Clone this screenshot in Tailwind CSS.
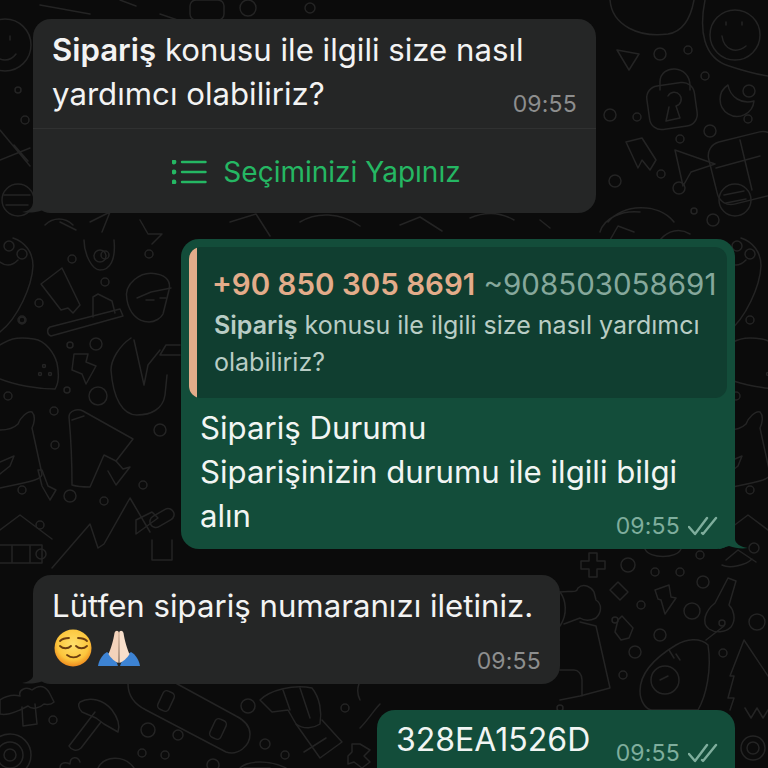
<!DOCTYPE html>
<html lang="tr">
<head>
  <meta charset="UTF-8" />
  <meta name="viewport" content="width=device-width, initial-scale=1.0" />
  <title>Sohbet</title>
  <script src="https://cdn.jsdelivr.net/npm/@tailwindcss/browser@4"></script>
</head>
<body class="bg-[#0b0b0b] font-['Inter','Liberation_Sans',sans-serif]">
  <div class="relative w-[768px] h-[768px] overflow-hidden">

    <!-- wallpaper doodles -->
    <svg class="absolute inset-0" width="768" height="768" viewBox="0 0 768 768" fill="none" stroke="#242424" stroke-width="1.5" stroke-linecap="round" stroke-linejoin="round">
      <g id="edge">
        <path d="M0 332c18-14 32-46 33-66 0-14-8-24-20-28" />
        <circle cx="9" cy="246" r="5" /><circle cx="22" cy="254" r="5" /><path d="M0 262c8 6 14 2 18-2" />
        <circle cx="22" cy="320" r="4" />
        <path d="M0 345c12-8 22-8 34-6 12 2 20 14 23 24 2 10 2 20-2 26-18 0-40-4-55-10" />
        <circle cx="44" cy="366" r="1.500" /><circle cx="40" cy="374" r="1.500" /><circle cx="50" cy="374" r="1.500" />
        <circle cx="8" cy="396" r="4" />
        <path d="M0 430c8 0 14-2 18-6 2-6 10-14 14-12 4 4 2 12 0 16l10 46c0 6-14 8-42 14" />
        <path d="M0 462l14-6-4 10-10 8" />
        <path d="M0 530l20-15 32 24" />
        <circle cx="22" cy="490" r="4" />
      </g>
      <use href="#edge" x="728" />

      <!-- top strip -->
      <circle cx="5" cy="45" r="26" /><path d="M-4 36v4M10 36v4M-6 54c6 8 16 8 22 0" />
      <path d="M160 14l76 26M40 5L90 14M120 0l16 6" />
      <rect x="190" y="0" width="34" height="20" rx="6" /><circle cx="248" cy="8" r="8" /><circle cx="310" cy="8" r="5" />
      <path d="M0 130l30 36M0 160l30-12M14 145l14 16" /><circle cx="25" cy="120" r="4" /><circle cx="18" cy="90" r="3" />
      <circle cx="18" cy="200" r="16" /><path d="M4 195h26M6 205h22" />
      <path d="M45 225c8-8 20-8 28 0M60 222l16 8M90 222l20-10-8 20" />
      <path d="M140 220l8 14 14 0-10 10M230 222l26-8 14 22M300 222c16-10 40-10 60 4" />
      <path d="M400 225l20-8 22 14M470 218c14-6 30-6 44 2M540 220l10 8" />

      <!-- left doodles -->
      <circle cx="72" cy="259" r="4" /><circle cx="105" cy="255" r="4" /><circle cx="149" cy="254" r="4" />
      <path d="M84 240c0 14 8 30 16 30 10 0 16-10 14-30" /><circle cx="100" cy="256" r="6" />
      <path d="M41 284l21-16 18 37-7 8-5-5-7 2z" />
      <path d="M50 327l70-18 3 7-72 20a5 5 0 0 1-1-9z" />
      <path d="M93 317v-20l5-3 14 7 3 12" />
      <circle cx="39" cy="303" r="4" /><circle cx="22" cy="320" r="3" /><circle cx="105" cy="282" r="4" />
      <path d="M127 300c-4-16 14-30 30-26 10 2 14 8 12 16l-6 24c-2 4-8 8-14 8-12 0-20-10-22-22z" />
      <path d="M137 298l14-6 20-4M146 300h8M160 298h6" />
      <path d="M134 340l10 45 4-20 12-15M111 370c0-10 8-24 20-32M180 345l-14 0-6 10 20 0M167 375l-2 20c-2 14-14 20-28 20-14 0-24-16-26-45" />
      <circle cx="70" cy="345" r="3" /><circle cx="96" cy="344" r="6" />
      <path d="M74 354l-2 16 10 4 4 10 10-18-10-4 2-8z" />
      <circle cx="67" cy="390" r="3" /><circle cx="98" cy="396" r="9" /><circle cx="54" cy="411" r="4" /><circle cx="160" cy="430" r="6" />
      <path d="M69 417c0-6 8-9 14-6l50 28-17 22-12-6-14 32c-6 0-12 0-18-2 0-22-1-46-3-68z" />
      <path d="M116 461l7 8 7-2-14 18-8-14M72 420l12-4" />
      <path d="M42 470l6 16 8 4-6 10-8-14-4-16z" />
      <circle cx="55" cy="445" r="4" /><circle cx="70" cy="496" r="6" /><circle cx="104" cy="501" r="4" /><circle cx="143" cy="485" r="4" />
      <path d="M0 545h42v18H0M12 545v18M30 545v18" /><circle cx="40" cy="525" r="4" /><circle cx="41" cy="554" r="5" />
      <path d="M52 568l38-44 8 24 6-4 26-46 20 34" />
      <path d="M136 520l16-8 6 6-22 16z" /><rect x="156" y="505" width="12" height="26" rx="6" transform="rotate(60 162 518)" />
      <path d="M152 540v20h20v-20" />

      <!-- top right -->
      <path d="M610 0c2 26 30 38 58 34 12-2 22-12 26-34" />
      <circle cx="660" cy="54" r="6" /><circle cx="688" cy="50" r="4" />
      <path d="M617 50l22 4-10 16z" />
      <circle cx="735" cy="35" r="25" /><path d="M722 36c2 14 14 18 24 10M726 22v3M742 22v3" />
      <path d="M705 0c-6 30-2 58 24 66 12 4 26 8 39 10" />
      <path d="M660 90v-8c0-18 30-18 30 4v4" />
      <rect x="648" y="84" width="48" height="44" rx="12" transform="rotate(-8 672 106)" />
      <path d="M668 96a7 7 0 1 1 8 10l4 12-14 3 3-14" />
      <circle cx="705" cy="76" r="4" /><circle cx="637" cy="117" r="4" /><circle cx="610" cy="115" r="6" /><circle cx="710" cy="131" r="6" /><circle cx="749" cy="91" r="6" /><circle cx="748" cy="119" r="4" /><circle cx="680" cy="139" r="4" />
      <path d="M728 85a17 17 0 1 0 26 16c-12 4-24-4-26-16z" />
      <path d="M626 142l16-4 14 22-6 10-8-10-4 8z" />
      <path d="M675 150l40 14-24 8-8 14z" />
      <circle cx="661" cy="174" r="4" /><circle cx="615" cy="181" r="6" /><circle cx="679" cy="188" r="6" /><circle cx="694" cy="211" r="3" /><circle cx="713" cy="220" r="6" />
      <rect x="712" y="136" width="70" height="64" rx="14" transform="rotate(-14 747 168)" />
      <path d="M716 168l44-12M740 140l12 50" />
      <circle cx="735" cy="200" r="16" /><path d="M724 195l20-4M726 203l20-4" />
      <path d="M608 222c14-18 50-20 66 0M600 232c4-14 22-22 40-20" />
      <path d="M610 240l8-14 16 6M660 240c8-10 20-12 30-6" />

      <!-- bottom right -->
      <path d="M589 553v8h-8v8h8v8h8v-8h8v-8h-8v-8z" />
      <circle cx="628" cy="565" r="7" /><circle cx="655" cy="572" r="4" /><circle cx="680" cy="572" r="4" /><circle cx="703" cy="582" r="6" />
      <path d="M645 549c4 10 32 10 36 0" /><circle cx="700" cy="555" r="4" />
      <path d="M610 590l8-8 10 10-8 8z" />
      <path d="M655 590l14-5 2 12 5 1-11 16-4-14-3-1z" />
      <circle cx="641" cy="605" r="4" /><circle cx="692" cy="611" r="8" />
      <path d="M728 578l8 3-7 24c4 4 8 14 2 22-6 6-16 6-22 2-8-6-4-18 6-26z" /><circle cx="722" cy="623" r="3" />
      <circle cx="757" cy="622" r="8" />
      <path d="M618 620l4-4 11 12-4 10-8 2-6-8z" /><circle cx="615" cy="620" r="3" />
      <circle cx="660" cy="635" r="6" /><circle cx="635" cy="652" r="6" /><circle cx="723" cy="653" r="4" /><circle cx="623" cy="675" r="4" />
      <path d="M708 645c-8-8-22-6-32 0-20 12-36 28-36 46 0 10 6 19 12 19h46c8-14 14-40 10-65z" />
      <circle cx="665" cy="680" r="14" /><path d="M669 650l5 8M676 654l4 6M660 680l8-4" /><path d="M706 640l18-14" />
      <path d="M744 640l-14 36 4 0-6 22 6 0-4 12M744 640l24 36" />
      <path d="M560 592c12-2 16 2 18-4 6-6 14 0 16 4l2 8c6 4 6 12 0 18-4 2-10 4-16 0l-16 6" />
      <path d="M560 592c6 8 8 22 0 34M580 622l16 4 14 62-30 8-20 4M560 670h14c4 0 8 4 8 10v16" />
      <circle cx="560" cy="708" r="3" /><path d="M722 565c8 4 24 0 30-6M726 560l12-10 18 12" />
      <circle cx="754" cy="548" r="5" />

      <!-- bottom left -->
      <path d="M0 700c6-4 12-6 20-4-2-6 6-10 12-6 8-6 14-4 18 4l4 8c-4 4-8 2-10 2-4 4-12 6-16 2l-8 4c-6 2-12 6-20 4z" />
      <path d="M22 707l1 19 14-2-2-20" />
      <circle cx="53" cy="720" r="4" />
      <path d="M80 702c10-6 24-2 32 8 6 8 8 16 6 22l-14-8-8-6-14-6c-4-4-4-8-2-10z" />
      <path d="M95 712l-26 34c2 4 8 6 12 2l20-26" />
      <circle cx="10" cy="755" r="21" /><circle cx="10" cy="755" r="13" /><circle cx="10" cy="755" r="6" />
      <circle cx="148" cy="730" r="7" /><circle cx="178" cy="735" r="5" /><circle cx="142" cy="753" r="4" /><circle cx="165" cy="755" r="4" /><circle cx="248" cy="706" r="7" /><circle cx="265" cy="744" r="5" /><circle cx="285" cy="755" r="4" /><circle cx="345" cy="708" r="4" /><circle cx="213" cy="765" r="6" />
      <path d="M128 684c0 12 6 20 18 26l80 42c12 4 24-6 24-18 0-8-6-14-14-18l-66-36" />
      <rect x="160" y="691" width="12" height="20" rx="4" transform="rotate(25 166 701)" /><rect x="212" y="719" width="12" height="20" rx="4" transform="rotate(25 218 729)" />
      <path d="M260 700c10-10 34-16 52-12 8 10 10 24 8 36-6 4-16 6-24 0l-8-14-16 2-8-8z" />
      <path d="M283 690l7 20M300 688l10 30M296 724l24 34 22-16-20-22" />
      <path d="M304 752l22-14" />
      <path d="M60 768c0-6 6-6 10-4 0-8 8-8 10-2M98 768c6-12 26-14 36 0M244 768h26M360 700c-4-8-2-16 2-22M360 728c8-8 14-18 20-24M240 768c8-8 30-8 46 0" />
      <path d="M360 744l10 6-6 6 6 6-8 6-8-6-6 2v-8l4-4v-8z" />
      <path d="M745 708l6 10 6-10 6 10 5-8" />
      <circle cx="753" cy="748" r="12" /><circle cx="753" cy="748" r="6" />
    </svg>

    <main class="relative flex flex-col gap-[26px] pt-[19px]">

      <!-- incoming list message -->
      <div class="relative self-start ml-[33px] w-[563px] h-[194px] rounded-[18px] bg-[#252626]">
        <svg class="absolute left-[-12px] bottom-0" width="30" height="20" viewBox="0 0 30 20" fill="#252626"><path d="M12 0v12c0 3-5 6-11 7 6 1 13 1 21-2l8 3V0z" /></svg>
        <div class="relative h-[109px] px-[19px] pt-[9px] text-[31.2px] leading-[44px] text-[#f3f3f3]">
          <p><span class="font-semibold">Sipariş</span> konusu ile ilgili size nasıl<br />yardımcı olabiliriz?</p>
          <span class="absolute right-[19px] top-[72px] text-[23px] leading-[26px] tracking-[0.2px] text-[#8d8e8e]">09:55</span>
        </div>
        <div class="relative flex items-center justify-center gap-[16px] h-[85px] pt-[2px] pl-[4px] border-t border-[#303131] text-[#25b763]">
          <svg width="35" height="24" viewBox="0 0 35 24" fill="none" stroke="currentColor" stroke-width="2.4" stroke-linecap="round">
            <path d="M10 2h23.500M10 12h23.500M10 22h23.500" />
            <circle cx="2" cy="2" r="1.200" fill="currentColor" /><circle cx="2" cy="12" r="1.200" fill="currentColor" /><circle cx="2" cy="22" r="1.200" fill="currentColor" />
          </svg>
          <span class="text-[28px] leading-[34px]">Seçiminizi Yapınız</span>
        </div>
      </div>

      <!-- outgoing reply -->
      <div class="relative self-end mr-[33px] w-[554px] h-[310px] rounded-[18px] bg-[#134d3a] p-[8px]">
        <svg class="absolute right-[-14px] bottom-0" width="30" height="20" viewBox="0 0 30 20" fill="#134d3a"><path d="M16 0v10c0 4 5 8 13 9-7 1-13 0-19-2l-10 3V0z" /></svg>
        <div class="relative flex h-[151px] rounded-[12px] bg-[#103e30] overflow-hidden">
          <div class="w-[8px] shrink-0 bg-[#e3ac8a]"></div>
          <div class="pl-[17px] pt-[19px] min-w-0">
            <p class="-ml-[2px] text-[29.5px] leading-[36px] whitespace-nowrap"><span class="font-semibold text-[#e3ac8a]">+90 850 305 8691</span> <span class="text-[#86a89c]">~908503058691</span></p>
            <p class="mt-[5px] text-[25px] leading-[37px] text-[#b9cdc5]"><span class="font-semibold">Sipariş</span> konusu ile ilgili size nasıl yardımcı<br />olabiliriz?</p>
          </div>
        </div>
        <div class="relative pl-[11px] pt-[8px] text-[31.2px] leading-[44px] text-[#f1f5f3]">
          <p>Sipariş Durumu<br />Siparişinizin durumu ile ilgili bilgi<br />alın</p>
          <div class="absolute right-[9px] top-[115px] flex items-center gap-[8px] text-[#7fae9d]">
            <span class="text-[23px] leading-[26px] tracking-[0.2px]">09:55</span>
            <svg width="30" height="20" viewBox="0 0 30 20" fill="none" stroke="currentColor" stroke-width="2.4" stroke-linecap="round" stroke-linejoin="round"><path d="M1 11l6 7L19 2M14 17l1 1L28 2" /></svg>
          </div>
        </div>
      </div>

      <!-- incoming ask -->
      <div class="relative self-start ml-[33px] w-[527px] h-[109px] rounded-[18px] bg-[#252626] px-[19px] pt-[9px]">
        <svg class="absolute left-[-12px] bottom-0" width="30" height="20" viewBox="0 0 30 20" fill="#252626"><path d="M12 0v12c0 3-5 6-11 7 6 1 13 1 21-2l8 3V0z" /></svg>
        <p class="relative text-[31.2px] leading-[44px] text-[#f3f3f3]">Lütfen sipariş numaranızı iletiniz.</p>
        <div class="relative flex items-center gap-[3px] h-[40px]">
          <svg width="42" height="40" viewBox="0 0 42 40">
            <defs><radialGradient id="face" cx="50%" cy="40%" r="60%"><stop offset="0%" stop-color="#ffdf6a" /><stop offset="70%" stop-color="#fcc63d" /><stop offset="100%" stop-color="#ef8a1e" /></radialGradient></defs>
            <circle cx="21" cy="20" r="18.500" fill="url(#face)" />
            <g fill="none" stroke="#6b3d10" stroke-width="1.800" stroke-linecap="round">
              <path d="M8 18c3 3 8 3 11 0M24 18c3 3 8 3 11 0M8 13c3-3 6-3 9-3M26 10c3 0 6 0 9 3M15 27c4 3 9 3 13 0" />
            </g>
          </svg>
          <svg width="44" height="40" viewBox="0 0 44 40">
            <path d="M1 38c1-6 4-11 9-14l8 6 3 8z" fill="#3d83d3" />
            <path d="M43 38c-1-6-4-11-9-14l-8 6-3 8z" fill="#3d83d3" />
            <path d="M21.500 35c-3-1-8-5-10-9 2-4 5-14 6-21 1-3 4-3 4.500 0z" fill="#f3d3bb" />
            <path d="M22.500 35c3-1 8-5 10-9-2-4-5-14-6-21-1-3-4-3-4.500 0z" fill="#f8dfcb" />
            <path d="M22 4v30" stroke="#c9a68c" stroke-width="1" />
          </svg>
        </div>
        <span class="absolute right-[19px] top-[73px] text-[23px] leading-[26px] tracking-[0.2px] text-[#8d8e8e]">09:55</span>
      </div>

      <!-- outgoing order number -->
      <div class="relative self-end mr-[33px] w-[358px] h-[80px] rounded-[18px] bg-[#134d3a] px-[19px] pt-[8px]">
        <p class="text-[32px] leading-[44px] text-[#f1f5f3]">328EA1526D</p>
        <div class="absolute right-[17px] top-[30px] flex items-center gap-[8px] text-[#7fae9d]">
          <span class="text-[23px] leading-[26px] tracking-[0.2px]">09:55</span>
          <svg width="30" height="20" viewBox="0 0 30 20" fill="none" stroke="currentColor" stroke-width="2.4" stroke-linecap="round" stroke-linejoin="round"><path d="M1 11l6 7L19 2M14 17l1 1L28 2" /></svg>
        </div>
      </div>
    </main>
  </div>
</body>
</html>
